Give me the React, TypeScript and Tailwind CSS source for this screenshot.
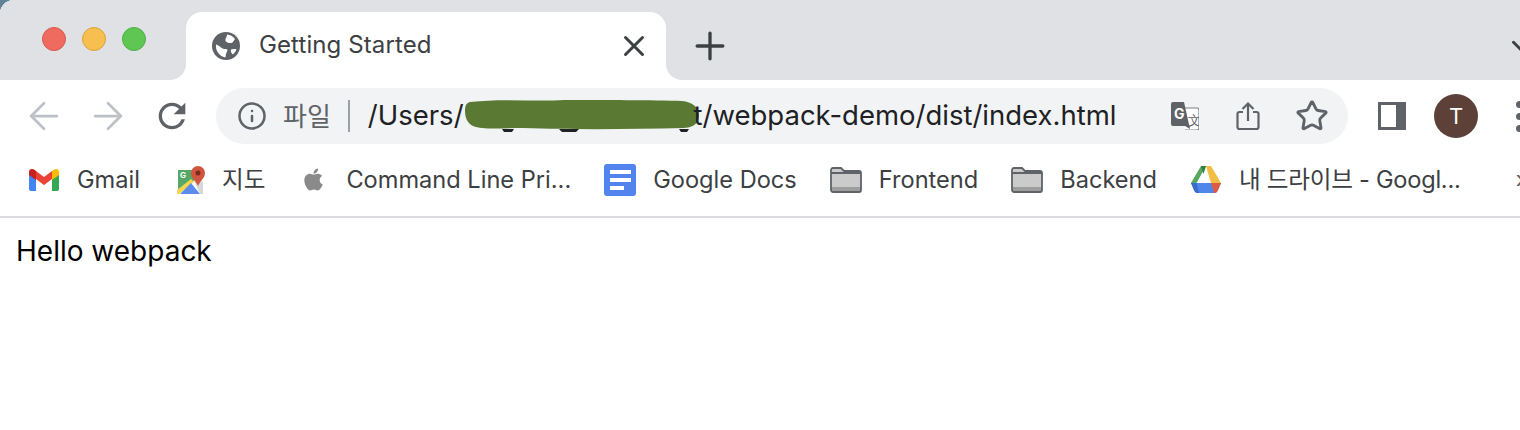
import { ArrowLeft, ArrowRight, ChevronDown, Info, Plus, Star, X } from 'lucide-react';
import { FaApple } from 'react-icons/fa';

function GlobeIcon() {
  return (
    <svg width="28" height="28" viewBox="0 0 28 28" className="flex-none">
      <circle cx="14" cy="14" r="14" fill="#5f6368" />
      <path d="M15 2.500c3 .2 6 1.800 8 4.500l-2.500 3.500c-1.500 1-3.500.5-5 0-1.500-.5-2.500-1.500-2-3.500.3-1.500 1.500-2 1.500-4.500z" fill="#fff" />
      <path d="M4 12.500c2 .5 3.500 1.500 5 3 1.500 1.300 3 1.500 5 1.500 1.500 0 2 1.500 1 2.500-1 1.500-1 3-1.500 6-3.500-.5-6-2.500-8-5.500C4.300 18 3.700 15 4 12.500z" fill="#fff" />
      <path d="M19 17.500c1-.8 3.500-.7 5.500-.2-.7 2.200-2 4-4 5.300-1-1.600-2.300-3.600-1.500-5.100z" fill="#fff" />
    </svg>
  );
}

function ReloadIcon() {
  return (
    <svg width="40" height="40" viewBox="0 0 24 24" fill="#5f6368">
      <path d="M17.650 6.350A7.958 7.958 0 0 0 12 4c-4.420 0-7.990 3.580-7.990 8s3.570 8 7.990 8c3.730 0 6.840-2.550 7.730-6h-2.080A5.990 5.990 0 0 1 12 18c-3.310 0-6-2.690-6-6s2.690-6 6-6c1.660 0 3.140.690 4.220 1.780L13 11h7V4l-2.350 2.350z" />
    </svg>
  );
}

function ShareIcon() {
  return (
    <svg width="24" height="30" viewBox="0 0 24 30" fill="none" stroke="#5f6368" strokeWidth="2.200">
      <path d="M7 11H3.500A2 2 0 0 0 1.500 13v13a2 2 0 0 0 2 2h17a2 2 0 0 0 2-2V13a2 2 0 0 0-2-2H17" />
      <path d="M12 20V2.500M6.500 8 12 2.500 17.500 8" />
    </svg>
  );
}

function TranslateIcon() {
  return (
    <svg width="28" height="28" viewBox="0 0 28 28">
      <path d="M11 6h15a2 2 0 0 1 2 2v18a2 2 0 0 1-2 2H14" fill="#fff" stroke="#7d8185" strokeWidth="1.200" />
      <path d="M2 0h11l6 27-5-3H2a2 2 0 0 1-2-2V2a2 2 0 0 1 2-2z" fill="#5f6368" />
      <text x="3" y="17" fontSize="14" fontWeight="700" fill="#fff" fontFamily="Inter, sans-serif">G</text>
      <text x="17" y="23" fontSize="13" fontWeight="500" fill="#5f6368" fontFamily="Inter, sans-serif">文</text>
    </svg>
  );
}

function GmailIcon() {
  return (
    <svg width="30" height="22" viewBox="0 0 30 22">
      <path d="M0 5v15a2 2 0 0 0 2 2h5V9z" fill="#4285f4" />
      <path d="M23 9v13h5a2 2 0 0 0 2-2V5z" fill="#34a853" />
      <path d="M7 2v8l8 6 8-6V2l-8 6z" fill="#ea4335" />
      <path d="M0 3v3l7 5V2L5.500.8C3-.8 0 0 0 3z" fill="#c5221f" />
      <path d="M23 2v9l7-5V3c0-3-3-3.800-5.500-2.200z" fill="#fbbc04" />
    </svg>
  );
}

function MapsIcon() {
  return (
    <svg width="28" height="28" viewBox="0 0 28 28">
      <path d="M1 4h17v10L1 26z" fill="#55a868" />
      <path d="M0 24 14 13l3 3L2 28H0z" fill="#f4d44d" />
      <path d="M3 28 14 17l9 11z" fill="#5b8cec" />
      <path d="M17 15l6 0 3 1v12h-3z" fill="#d8d8d8" />
      <text x="3" y="12" fontSize="8" fontWeight="700" fill="#fff" fontFamily="Inter, sans-serif">G</text>
      <path d="M21 0a7 7 0 0 0-7 7c0 5 5 8 7 13 2-5 7-8 7-13a7 7 0 0 0-7-7z" fill="#d2553f" />
      <circle cx="21" cy="7" r="2.500" fill="#7a2b20" />
    </svg>
  );
}

function DocsIcon() {
  return (
    <svg width="32" height="32" viewBox="0 0 32 32">
      <rect width="32" height="32" rx="3" fill="#5383ec" />
      <rect x="6" y="6" width="21" height="4" fill="#fff" />
      <rect x="6" y="14" width="21" height="4" fill="#fff" />
      <rect x="6" y="22" width="14" height="4" fill="#fff" />
    </svg>
  );
}

function FolderIcon() {
  return (
    <svg width="32" height="26" viewBox="0 0 32 26">
      <path d="M1 23V3a2 2 0 0 1 2-2h8l3 3h15a2 2 0 0 1 2 2v17a2 2 0 0 1-2 2H3a2 2 0 0 1-2-2z" fill="#cbcbcb" />
      <path d="M1 20h30v3a2 2 0 0 1-2 2H3a2 2 0 0 1-2-2z" fill="#9e9e9e" />
      <path d="M1 23V3a2 2 0 0 1 2-2h8l3 3h15a2 2 0 0 1 2 2v17a2 2 0 0 1-2 2H3a2 2 0 0 1-2-2zM1 6h30" fill="none" stroke="#5f6368" strokeWidth="1.800" />
    </svg>
  );
}

function DriveIcon() {
  return (
    <svg width="30" height="27" viewBox="0 0 30 27">
      <path d="M10 0h5L5.500 17H0z" fill="#57a85f" />
      <path d="M10 0h5l-2.500 8z" fill="#2f7d3f" />
      <path d="M15 0h5l10 17h-10z" fill="#f2bd42" />
      <path d="M5.500 17H30l-3 7a4 4 0 0 1-3 3H6a4 4 0 0 1-3-3l-3-7z" fill="#4f86ec" />
      <path d="M0 17h5.500L8 27H6a4 4 0 0 1-3-3z" fill="#3a6cc8" />
      <path d="M23 27h1a4 4 0 0 0 3-3l3-7h-10z" fill="#dd5b43" />
    </svg>
  );
}

const bookmarks = [
  { label: 'Gmail', icon: <GmailIcon />, className: 'ml-[29px] gap-[18px]' },
  { label: '지도', icon: <MapsIcon />, className: 'ml-[37px] gap-[17px]' },
  { label: 'Command Line Pri...', icon: <FaApple size={25} color="#8a8a8a" />, className: 'ml-[36px] gap-[20px]' },
  { label: 'Google Docs', icon: <DocsIcon />, className: 'ml-[33px] gap-[17px]' },
  { label: 'Frontend', icon: <FolderIcon />, className: 'ml-[33px] gap-[17px]' },
  { label: 'Backend', icon: <FolderIcon />, className: 'ml-[33px] gap-[17px]' },
  { label: '내 드라이브 - Googl...', icon: <DriveIcon />, className: 'ml-[34px] gap-[18px] tracking-[-0.25px]' },
];

export default function App() {
  return (
    <div className="h-[430px] w-[1520px] overflow-hidden bg-[#5f8294] font-['Inter','Noto_Sans_CJK_KR',sans-serif]">
      <div className="h-full overflow-hidden rounded-tl-[14px] bg-white">
        {/* Tab strip */}
        <div className="flex h-[80px] bg-[linear-gradient(#dfe1e5_50%,#ffffff_50%)]">
          <div className="flex w-[186px] flex-none gap-4 rounded-br-[16px] bg-[#dfe1e5] pl-[42px] pt-[27px]">
            <span className="h-6 w-6 rounded-full border border-[#d9574e] bg-[#ef6b60]" />
            <span className="h-6 w-6 rounded-full border border-[#dca33a] bg-[#f6bf4f]" />
            <span className="h-6 w-6 rounded-full border border-[#4fae45] bg-[#60c653]" />
          </div>
          <div className="mt-3 flex w-[480px] flex-none items-center rounded-t-[16px] bg-white pl-[26px] pr-[15px]">
            <GlobeIcon />
            <span className="ml-[19px] flex-1 pb-[2px] text-[24px] tracking-[0.1px] text-[#3c4043]">Getting Started</span>
            <X size={34} strokeWidth={2.1} color="#3c4043" />
          </div>
          <div className="flex flex-1 items-center rounded-bl-[16px] bg-[#dfe1e5] pl-[22px] pt-3">
            <Plus size={44} strokeWidth={1.8} color="#3c4043" />
            <ChevronDown size={30} strokeWidth={2.4} color="#3c4043" className="ml-auto mr-[-16px]" />
          </div>
        </div>

        {/* Toolbar */}
        <div className="flex h-[72px] items-center pl-3">
          <div className="flex w-16 flex-none justify-center"><ArrowLeft size={44} strokeWidth={1.5} color="#bdc1c6" /></div>
          <div className="flex w-16 flex-none justify-center"><ArrowRight size={44} strokeWidth={1.5} color="#bdc1c6" /></div>
          <div className="flex w-16 flex-none justify-center"><ReloadIcon /></div>
          <div className="ml-3 flex h-14 w-[1132px] flex-none items-center rounded-full bg-[#f1f3f4] pl-[21px]">
            <Info size={30} strokeWidth={2} color="#5f6368" className="flex-none" />
            <span className="ml-4 text-[26px] text-[#5f6368]">파일</span>
            <span className="ml-[17px] h-8 w-[2px] bg-[#9aa0a6]" />
            <span className="ml-[18px] text-[27.5px] text-[#202124]">/Users/</span>
            <svg width="236" height="34" viewBox="0 0 236 34" className="flex-none">
              <path d="M38 30h12l-2 3h-8zM95 30h20l-3 3H98zM215 30h10l-2 3h-6z" fill="#202124" />
              <path d="M6 3C40-1 70 3 100 1c40 0 90 0 118 1 10 1 17 6 17 14 0 9-7 13-16 13-50 1-100 2-160 0-20 0-40 2-50-2C3 24 1 18 1 12 1 7 2 4 6 3z" fill="#5a7a34" />
            </svg>
            <span className="ml-[-6px] text-[27.5px] text-[#202124]">t/webpack-demo/dist/index.html</span>
            <div className="ml-auto flex flex-none items-center">
              <TranslateIcon />
              <div className="ml-[37px]"><ShareIcon /></div>
              <Star size={34} strokeWidth={2} color="#5f6368" className="ml-[35px] mr-[19px]" />
            </div>
          </div>
          <div className="ml-[30px] h-7 w-7 flex-none border-[3px] border-r-[10px] border-[#5f6368] bg-white" />
          <div className="ml-[28px] flex h-11 w-11 flex-none items-center justify-center rounded-full bg-[#5d4037] text-[22px] text-white">T</div>
          <div className="ml-[38px] flex flex-none flex-col gap-[5px]">
            <span className="h-[7px] w-[7px] rounded-full bg-[#5f6368]" />
            <span className="h-[7px] w-[7px] rounded-full bg-[#5f6368]" />
            <span className="h-[7px] w-[7px] rounded-full bg-[#5f6368]" />
          </div>
        </div>

        {/* Bookmarks bar */}
        <div className="flex h-[66px] items-center border-b-2 border-[#dadce0] pb-2">
          {bookmarks.map((b) => (
            <div key={b.label} className={`flex flex-none items-center ${b.className}`}>
              {b.icon}
              <span className="whitespace-nowrap text-[23.6px] text-[#3c4043]">{b.label}</span>
            </div>
          ))}
          <span className="ml-[55px] text-[24px] text-[#5f6368]">»</span>
        </div>

        {/* Page */}
        <div className="pl-4 pt-3 text-[28px] text-black">Hello webpack</div>
      </div>
    </div>
  );
}
